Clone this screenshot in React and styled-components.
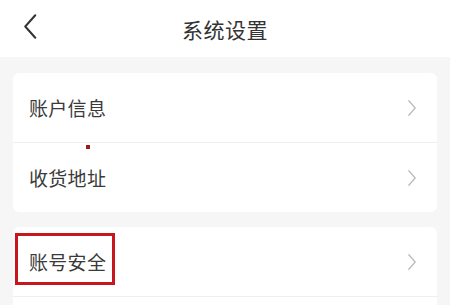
import React from 'react';
import styled, { createGlobalStyle } from 'styled-components';

const GlobalStyle = createGlobalStyle`
  html, body {
    margin: 0;
    padding: 0;
    background: #f6f6f6;
    font-family: "Noto Sans CJK SC", "Noto Sans", sans-serif;
  }
`;

const groups = [
  [
    { id: 'account', label: '账户信息' },
    { id: 'address', label: '收货地址', dot: true },
  ],
  [
    { id: 'security', label: '账号安全', marked: true },
    { id: 'more', label: '' },
  ],
];

const Chevron = ({ size = 16, color = '#bbb', width = 1.6, left }) => (
  <svg width={size / 2 + 2} height={size} viewBox="0 0 10 20" fill="none">
    <path
      d={left ? 'M9 1 L1 10 L9 19' : 'M1 1 L9 10 L1 19'}
      stroke={color}
      strokeWidth={width}
      strokeLinecap="round"
      strokeLinejoin="round"
    />
  </svg>
);

const App = () => (
  <Page>
    <GlobalStyle />
    <Header>
      <BackButton>
        <Chevron size={25} color="#333" width={1.6} left />
      </BackButton>
      <Title>系统设置</Title>
    </Header>

    <Content>
      {groups.map((group, i) => (
        <Card key={i}>
          {group.map((item) => (
            <Row key={item.id}>
              <Label marked={item.marked}>
                {item.label}
                {item.dot && <Dot />}
              </Label>
              <Chevron />
            </Row>
          ))}
        </Card>
      ))}
    </Content>
  </Page>
);

const Page = styled.div`
  height: 305px;
  overflow: hidden;
  background: #f6f6f6;
`;

const Header = styled.div`
  position: relative;
  height: 57px;
  background: white;
  display: flex;
  align-items: center;
  justify-content: center;
`;

const BackButton = styled.div`
  position: absolute;
  left: 23px;
  top: 14px;
  display: flex;
`;

const Title = styled.h1`
  margin: 0;
  font-size: 21px;
  font-weight: 400;
  color: #333;
  letter-spacing: 0.5px;
`;

const Content = styled.div`
  padding: 16px 13px;
  display: flex;
  flex-direction: column;
  gap: 15px;
`;

const Card = styled.div`
  background: white;
  border-radius: 6px;
  overflow: hidden;
`;

const Row = styled.div`
  height: 69px;
  padding: 0 20px 0 16px;
  display: flex;
  align-items: center;
  justify-content: space-between;

  & + & {
    border-top: 1px solid #eeeeee;
  }
`;

const Label = styled.span`
  position: relative;
  font-size: 19px;
  color: #3a3a3a;
  letter-spacing: 0.3px;

  &::after {
    content: '';
    display: ${(p) => (p.marked ? 'block' : 'none')};
    position: absolute;
    left: -14px;
    right: -9px;
    top: -15px;
    bottom: -10px;
    border: 3px solid #c8161d;
  }
`;

const Dot = styled.i`
  position: absolute;
  left: 57px;
  top: -19px;
  width: 4px;
  height: 4px;
  background: #a01c1c;
`;

export default App;
